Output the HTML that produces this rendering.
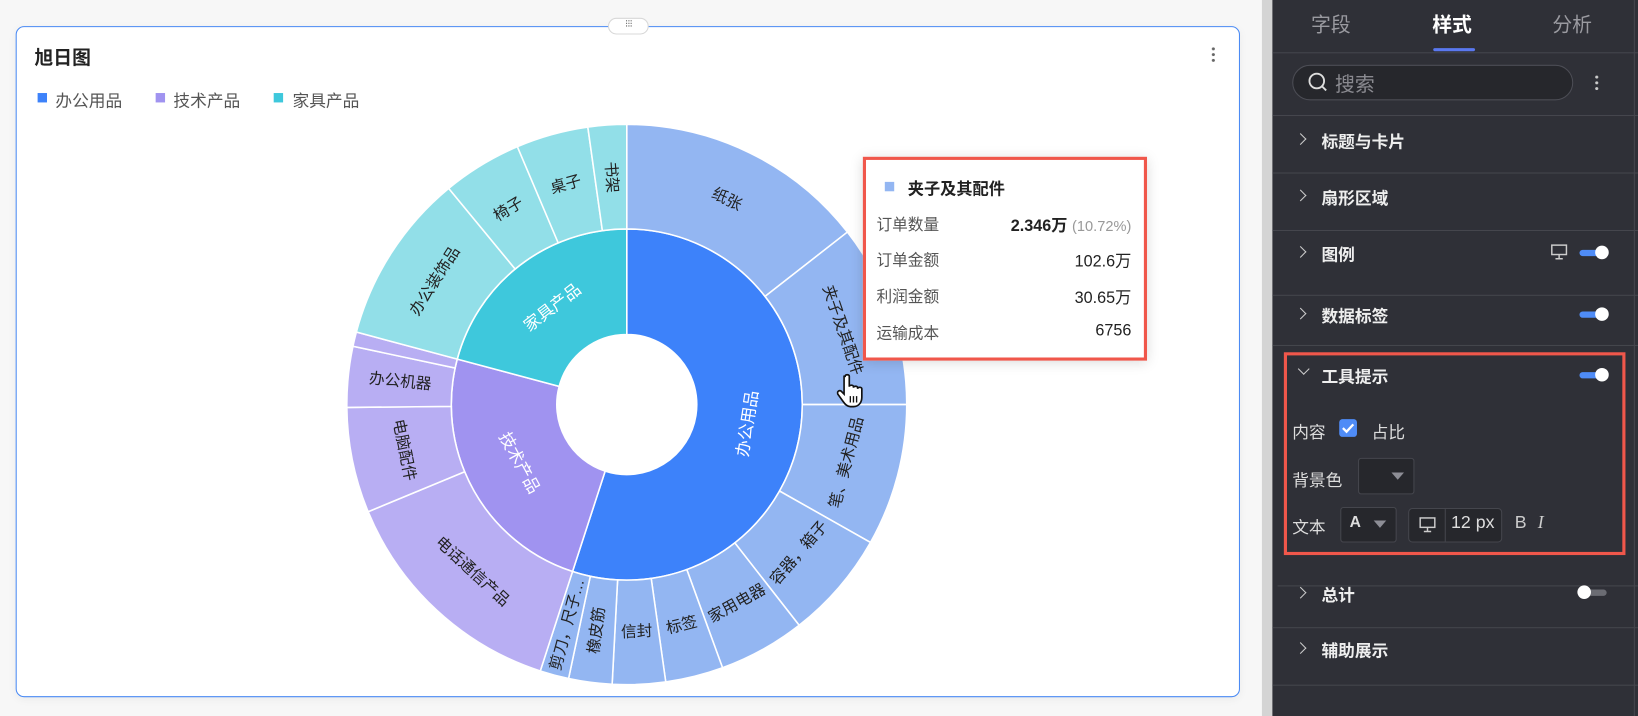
<!DOCTYPE html>
<html><head><meta charset="utf-8">
<style>
*{margin:0;padding:0;box-sizing:border-box}
html,body{width:1638px;height:716px;overflow:hidden;background:#f7f7f7}
body{font-family:"Liberation Sans","Noto Sans CJK SC",sans-serif}
#s{position:absolute;left:0;top:0;width:1568px;height:685px;transform:scale(1.04464,1.0453);transform-origin:0 0}
.abs{position:absolute}
.card{left:15px;top:25px;width:1172px;height:642px;background:#fff;border:1px solid #4a8af4;border-radius:8px;box-shadow:0 2px 8px rgba(0,0,0,.05)}
.panel{left:1218px;top:0;width:350px;height:685px;background:#2f3037;color:#e8e8ea}
.div{position:absolute;left:0;width:350px;height:1px;background:#45464d}
.row{position:absolute;left:47px;font-size:16px;font-weight:bold;color:#eee}
.chev{position:absolute;left:23px;width:8px;height:8px;border-right:1.5px solid #ccc;border-top:1.5px solid #ccc;transform:rotate(45deg)}
.tg{position:absolute;width:26px;height:6px;border-radius:3px;background:#4f8cf7}
.tg::after{content:"";position:absolute;right:-2px;top:-4px;width:13px;height:13px;border-radius:50%;background:#fff}
.tg.off{background:#6b6c73}
.tg.off::after{right:auto;left:-2px}
.lbl{position:absolute;font-size:16px;color:#ddd}
.tt{left:826px;top:150px;width:272px;height:195px;border:3px solid #f0574b;background:#fff;box-shadow:0 2px 12px rgba(0,0,0,.15);font-size:15px;color:#555}
.tt .r{position:absolute;left:10px;right:12px;height:20px}
.tt .r b{position:absolute;right:0;font-weight:normal;color:#222;font-size:15.5px}
</style></head><body>
<div id="s">
<div class="abs card"></div>
<div class="abs" style="left:582px;top:17px;width:39px;height:16px;background:#fff;border:1px solid #d8d8d8;border-radius:8px;font-size:10px;color:#777;text-align:center;line-height:12px;letter-spacing:-1px">⁝⁝⁝</div>
<div class="abs" style="left:33px;top:41px;font-size:18px;font-weight:bold;color:#222">旭日图</div>
<div class="abs" style="left:1160px;top:44px;width:3px;height:16px;background:radial-gradient(circle,#666 1.3px,transparent 1.6px) 0 0/3px 5.5px"></div>
<div class="abs" style="left:36px;top:89px;width:9px;height:9px;background:#3d82fa"></div>
<div class="abs" style="left:53px;top:83px;font-size:16px;color:#555">办公用品</div>
<div class="abs" style="left:149px;top:89px;width:9px;height:9px;background:#a093f0"></div>
<div class="abs" style="left:166px;top:83px;font-size:16px;color:#555">技术产品</div>
<div class="abs" style="left:262px;top:89px;width:9px;height:9px;background:#3ec8dc"></div>
<div class="abs" style="left:280px;top:83px;font-size:16px;color:#555">家具产品</div>

<svg class="abs" id="sb" style="left:0;top:0" width="1200" height="685" font-family="Liberation Sans,Noto Sans CJK SC,sans-serif"></svg>

<div class="abs tt">
<div class="abs" style="left:18px;top:21px;width:9px;height:9px;background:#93b6f2"></div>
<div class="abs" style="left:40px;top:16px;font-size:15.5px;font-weight:bold;color:#222">夹子及其配件</div>
<div class="r" style="top:51px">订单数量<b><span style="font-weight:bold">2.346万</span> <span style="color:#999;font-size:14px">(10.72%)</span></b></div>
<div class="r" style="top:85px">订单金额<b>102.6万</b></div>
<div class="r" style="top:120px">利润金额<b>30.65万</b></div>
<div class="r" style="top:155px">运输成本<b>6756</b></div>
</div>
<svg class="abs" style="left:801px;top:357px" width="30" height="34" viewBox="0 0 30 34"><path d="M8 3c0-2 4-2 4 0v10c0-2 4-2 4 0v1c0-2 4-2 4 0v1c0-2 4-2 4 0v8c0 5-3 9-8 9h-3c-3 0-5-2-7-5l-5-7c-1-2 1-4 3-3l3 3V3z" fill="#fff" stroke="#111" stroke-width="1.6"/><path d="M13 22v6M16 22v6M19 22v6" stroke="#111" stroke-width="1.3"/></svg>

<div class="abs" style="left:1208px;top:0;width:10px;height:685px;background:#d4d4d4"></div>
<div class="abs panel">
<div class="abs" style="left:37px;top:9px;font-size:19px;color:#9a9aa0">字段</div>
<div class="abs" style="left:153px;top:9px;font-size:19px;color:#fff;font-weight:bold">样式</div>
<div class="abs" style="left:268px;top:9px;font-size:19px;color:#9a9aa0">分析</div>
<div class="abs" style="left:154px;top:46px;width:40px;height:3px;background:#5a78f0;border-radius:2px"></div>
<div class="div" style="top:50px"></div>
<div class="abs" style="left:19px;top:62px;width:269px;height:34px;border:1px solid #4c4d55;border-radius:17px;background:#26272c"></div>
<svg class="abs" style="left:33px;top:68px" width="22" height="22"><circle cx="9.5" cy="9.5" r="7" fill="none" stroke="#ddd" stroke-width="1.8"/><path d="M14.5 14.5l4 4" stroke="#ddd" stroke-width="1.8"/></svg>
<div class="abs" style="left:60px;top:66px;font-size:19px;color:#8a8a90">搜索</div>
<div class="abs" style="left:309px;top:71px;width:3px;height:16px;background:radial-gradient(circle,#ccc 1.3px,transparent 1.6px) 0 0/3px 5.5px"></div>
<div class="div" style="top:110px"></div>
<div class="chev" style="top:129px"></div><div class="row" style="top:122px">标题与卡片</div>
<div class="div" style="top:165px"></div>
<div class="chev" style="top:183px"></div><div class="row" style="top:176px">扇形区域</div>
<div class="div" style="top:220px"></div>
<div class="chev" style="top:237px"></div><div class="row" style="top:230px">图例</div>
<svg class="abs" style="left:266px;top:233px" width="18" height="16"><rect x="1.5" y="1.5" width="14" height="9" fill="none" stroke="#ccc" stroke-width="1.4"/><path d="M8.5 11v3M5 14.5h7" stroke="#ccc" stroke-width="1.4"/></svg>
<div class="tg" style="left:294px;top:239px"></div>
<div class="div" style="top:282px"></div>
<div class="chev" style="top:296px"></div><div class="row" style="top:289px">数据标签</div>
<div class="tg" style="left:294px;top:298px"></div>
<div class="div" style="top:330px"></div>
<div class="abs" style="left:11px;top:337px;width:327px;height:194px;border:3px solid #f0574b"></div>
<div class="abs" style="left:26px;top:349px;width:8px;height:8px;border-right:1.5px solid #ccc;border-bottom:1.5px solid #ccc;transform:rotate(45deg)"></div>
<div class="row" style="top:347px">工具提示</div>
<div class="tg" style="left:294px;top:356px"></div>
<div class="lbl" style="left:19px;top:400px">内容</div>
<div class="abs" style="left:64px;top:401px;width:17px;height:17px;background:#4f8cf7;border-radius:3px"></div>
<svg class="abs" style="left:64px;top:401px" width="17" height="17"><path d="M3.5 8.5l3.5 3.5 6.5-7" fill="none" stroke="#fff" stroke-width="2.2"/></svg>
<div class="lbl" style="left:95px;top:400px">占比</div>
<div class="lbl" style="left:19px;top:446px">背景色</div>
<div class="abs" style="left:82px;top:438px;width:54px;height:35px;border:1px solid #45464d;border-radius:3px;background:#26272c"></div>
<div class="abs" style="left:114px;top:452px;border-left:6px solid transparent;border-right:6px solid transparent;border-top:7px solid #8d8e96"></div>
<div class="lbl" style="left:19px;top:491px">文本</div>
<div class="abs" style="left:65px;top:485px;width:54px;height:34px;border:1px solid #45464d;border-radius:3px;background:#26272c"></div>
<div class="abs" style="left:74px;top:491px;font-size:15px;font-weight:bold;color:#ddd">A</div>
<div class="abs" style="left:97px;top:498px;border-left:6px solid transparent;border-right:6px solid transparent;border-top:7px solid #8d8e96"></div>
<div class="abs" style="left:130px;top:486px;width:90px;height:33px;border:1px solid #45464d;border-radius:4px;background:#26272c"></div>
<div class="abs" style="left:165px;top:487px;width:1px;height:31px;background:#45464d"></div>
<svg class="abs" style="left:140px;top:494px" width="18" height="16"><rect x="1.5" y="1.5" width="14" height="9" fill="none" stroke="#ccc" stroke-width="1.4"/><path d="M8.5 11v3M5 14.5h7" stroke="#ccc" stroke-width="1.4"/></svg>
<div class="abs" style="left:171px;top:490px;font-size:17px;color:#ddd">12 px</div>
<div class="abs" style="left:232px;top:490px;font-size:17px;color:#ccc">B</div>
<div class="abs" style="left:254px;top:490px;font-size:17px;color:#ccc;font-style:italic;font-family:'Liberation Serif',serif">I</div>
<div class="div" style="top:560px;left:5px"></div>
<div class="chev" style="top:563px"></div><div class="row" style="top:556px">总计</div>
<div class="tg off" style="left:294px;top:564px"></div>
<div class="div" style="top:600px"></div>
<div class="chev" style="top:616px"></div><div class="row" style="top:609px">辅助展示</div>
<div class="div" style="top:655px"></div>
<div class="abs" style="left:346px;top:0;width:1px;height:685px;background:#45464d"></div>
</div>
</div>
<script>
var cx=600,cy=387,r0=67,r1=168,r2=268,NS="http://www.w3.org/2000/svg",svg=document.getElementById('sb');
function pt(a,r){a=a*Math.PI/180;return [cx+r*Math.sin(a),cy-r*Math.cos(a)];}
function seg(a1,a2,ra,rb,fill){var p1=pt(a1,rb),p2=pt(a2,rb),p3=pt(a2,ra),p4=pt(a1,ra),l=(a2-a1)>180?1:0;
var d="M"+p1+"A"+rb+","+rb+" 0 "+l+" 1 "+p2+"L"+p3+"A"+ra+","+ra+" 0 "+l+" 0 "+p4+"Z";
var e=document.createElementNS(NS,'path');e.setAttribute('d',d);e.setAttribute('fill',fill);e.setAttribute('stroke','#fff');e.setAttribute('stroke-width','1.5');svg.appendChild(e);}
function txt(t,a,r,rot,col,fs){var p=pt(a,r),e=document.createElementNS(NS,'text');e.setAttribute('x',p[0]);e.setAttribute('y',p[1]);e.setAttribute('text-anchor','middle');e.setAttribute('dominant-baseline','central');e.setAttribute('font-size',fs||15);e.setAttribute('fill',col);e.setAttribute('transform','rotate('+rot+' '+p[0]+' '+p[1]+')');e.textContent=t;svg.appendChild(e);}
var B='#3d82fa',BO='#93b6f2',P='#a093f0',PO='#b8aef3',C='#3ec8dc',CO='#92dfe8';
seg(0,198,r0,r1,B);seg(198,285,r0,r1,P);seg(285,360,r0,r1,C);
var o=[[0,52,BO,'纸张','t'],[52,90,BO,'夹子及其配件','t'],[90,119.5,BO,'笔、美术用品','t'],[119.5,142,BO,'容器，箱子','t'],[142,160,BO,'家用电器','t'],[160,172,BO,'标签','t'],[172,183,BO,'信封','t'],[183,192,BO,'橡皮筋','r'],[192,198,BO,'剪刀，尺子…','r'],
[198,247.5,PO,'电话通信产品','t'],[247.5,269.4,PO,'电脑配件','t'],[269.4,282,PO,'办公机器','r'],[282,285,PO,'',''],
[285,320.5,CO,'办公装饰品','t'],[320.5,337,CO,'椅子','t'],[337,352,CO,'桌子','t'],[352,360,CO,'书架','r']];
o.forEach(function(s){seg(s[0],s[1],r1,r2,s[2]);});
txt('办公用品',99,117,-81,'#fff',16);txt('技术产品',241.5,117,61.5,'#fff',16);txt('家具产品',322.5,117,-37.5,'#fff',16);
o.forEach(function(s){if(!s[3])return;var m=(s[0]+s[1])/2,rot;
if(s[4]=='t'){rot=m;if(m>90&&m<270)rot=m-180;if(m>=270)rot=m-360;}else{rot=m-90;if(m>180)rot=m-270;}
txt(s[3],m,218,rot,'#222',15);});
</script>
</body></html>
